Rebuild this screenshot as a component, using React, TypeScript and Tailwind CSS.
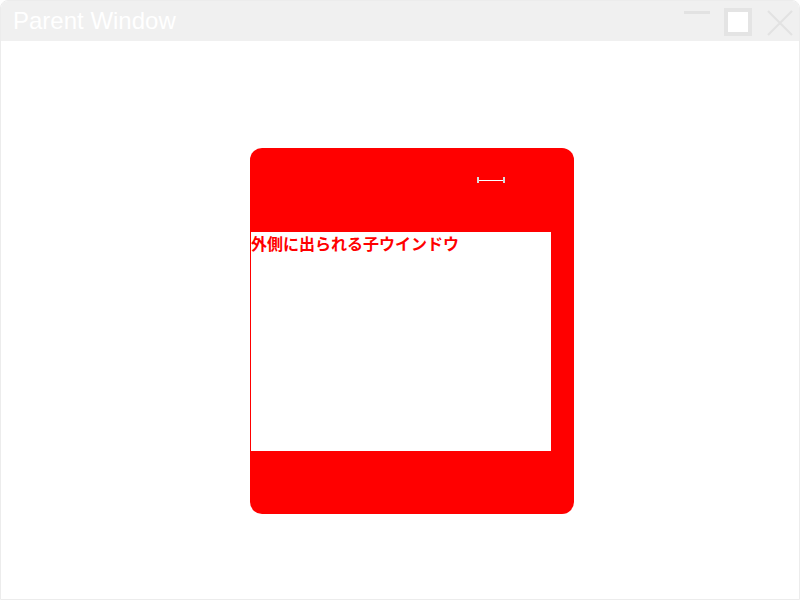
import React from 'react';

const TitleControls = () => {
    return (
        <div className="flex items-start h-full pt-[7px] pr-[5px] gap-[14px]">
            {/* minimize */}
            <div className="w-[26px] h-[3px] mt-[3px] bg-[#e2e2e2]" />
            {/* maximize */}
            <div className="w-[28px] h-[28px] bg-white border-[4px] border-[#e4e4e4]" />
            {/* close */}
            <svg width="28" height="28" viewBox="0 0 28 28" className="mt-[1px]">
                <path d="M2 2 L26 26 M26 2 L2 26" stroke="#e2e2e2" strokeWidth="2.2" fill="none" />
            </svg>
        </div>
    );
};

const ChildWindow = () => {
    return (
        <div className="relative w-[324px] h-[366px] bg-[#ff0000] rounded-[12px] flex flex-col">
            {/* leftover glyph from the child title bar */}
            <div className="absolute left-[227px] top-[29px] flex items-center">
                <div className="w-[2px] h-[6px] bg-[#d9d9d9]" />
                <div className="w-[24px] h-[1px] bg-white" />
                <div className="w-[2px] h-[6px] bg-[#d9d9d9]" />
            </div>

            <div className="h-[84px] shrink-0" />
            <div className="ml-[1px] w-[300px] h-[219px] bg-white">
                <p
                    className="pt-[1px] text-[16px] leading-[20px] font-bold text-[#ff0000]"
                    style={{ fontFamily: '"Noto Sans CJK JP", "Noto Sans", sans-serif' }}
                >
                    外側に出られる子ウインドウ
                </p>
            </div>
        </div>
    );
};

export default function App() {
    return (
        <div
            className="w-[800px] h-[600px] bg-white border border-[#ececec] rounded-t-[8px] overflow-hidden flex flex-col"
            style={{ fontFamily: '"Liberation Sans", Arial, sans-serif' }}
        >
            {/* title bar */}
            <div className="h-[40px] shrink-0 bg-[#f0f0f0] flex items-center justify-between">
                <span className="pl-[12px] text-[24px] leading-none text-white">Parent Window</span>
                <TitleControls />
            </div>

            {/* client area */}
            <div className="flex-1 pl-[249px] pt-[107px]">
                <ChildWindow />
            </div>
        </div>
    );
}
